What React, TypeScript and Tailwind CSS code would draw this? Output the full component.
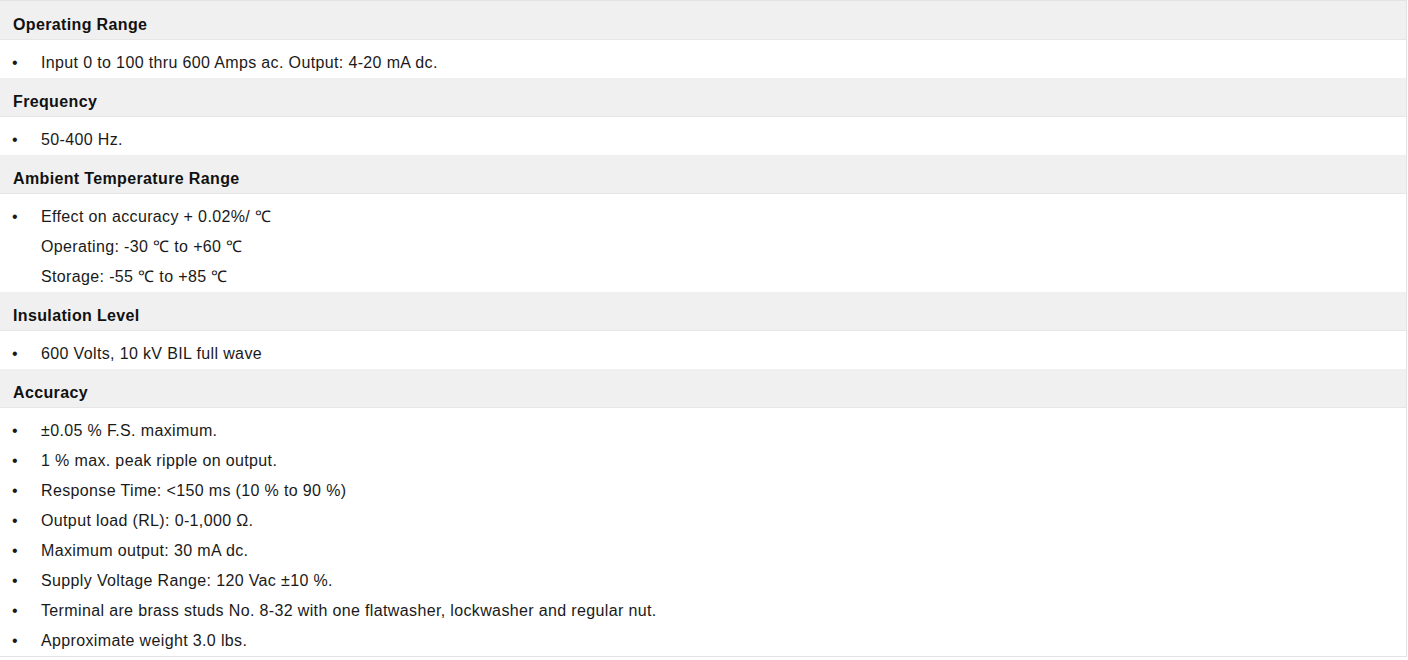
import React from 'react';

interface Section {
  title: string;
  items: { text: string; bullet: boolean }[];
}

const b = (text: string) => ({ text, bullet: true });
const c = (text: string) => ({ text, bullet: false });

const sections: Section[] = [
  { title: 'Operating Range', items: [b('Input 0 to 100 thru 600 Amps ac. Output: 4-20 mA dc.')] },
  { title: 'Frequency', items: [b('50-400 Hz.')] },
  {
    title: 'Ambient Temperature Range',
    items: [b('Effect on accuracy + 0.02%/ \u2103'), c('Operating: -30 \u2103 to +60 \u2103'), c('Storage: -55 \u2103 to +85 \u2103')],
  },
  { title: 'Insulation Level', items: [b('600 Volts, 10 kV BIL full wave')] },
  {
    title: 'Accuracy',
    items: [
      b('\u00b10.05 % F.S. maximum.'),
      b('1 % max. peak ripple on output.'),
      b('Response Time: <150 ms (10 % to 90 %)'),
      b('Output load (RL): 0-1,000 \u03a9.'),
      b('Maximum output: 30 mA dc.'),
      b('Supply Voltage Range: 120 Vac \u00b110 %.'),
      b('Terminal are brass studs No. 8-32 with one flatwasher, lockwasher and regular nut.'),
      b('Approximate weight 3.0 lbs.'),
    ],
  },
];

export default function App() {
  return (
    <div className="w-[1408px] h-[660px] bg-white font-['Liberation_Sans',Arial,sans-serif] text-[16px] tracking-[0.36px] text-[#1a1a1a]">
      <div className="w-[1407px] border-t border-r border-b border-[#e3e3e3]">
        {sections.map((s) => (
          <div key={s.title}>
            <div className="h-[39px] bg-[#f0f0f0] border-b border-[#e6e6e6] pl-[13px] pt-[13px] leading-[22px] font-bold text-[#111]">
              {s.title}
            </div>
            <ul className="pt-[8px]">
              {s.items.map((it, i) => (
                <li key={i} className="flex h-[30px] leading-[30px]">
                  <span className="w-[41px] pl-[12px]">{it.bullet ? '\u2022' : ''}</span>
                  <span>{it.text}</span>
                </li>
              ))}
            </ul>
          </div>
        ))}
      </div>
    </div>
  );
}
